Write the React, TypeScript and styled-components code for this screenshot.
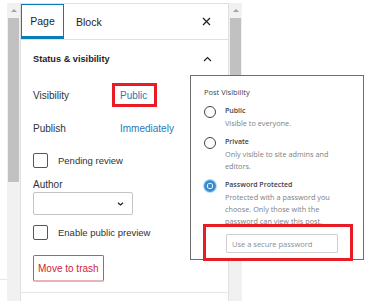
import styled, { createGlobalStyle } from "styled-components"

const Global = createGlobalStyle`
  body {
    margin: 0;
    background: #fff;
    font-family: "Liberation Sans", Arial, sans-serif;
    color: #2c3338;
  }
`

export default function App() {
  return (
    <Screen>
      <Global />
      <Gutter />
      <Scrollbar>
        <Arrow />
        <Thumb $h={164} />
      </Scrollbar>
      <Panel>
        <TabBar>
          <Tab $active>Page</Tab>
          <Tab>Block</Tab>
          <IconButton>
            <svg width="9" height="9" viewBox="0 0 9 9">
              <path d="M1 1L8 8M8 1L1 8" stroke="#1e1e1e" strokeWidth="1.2" />
            </svg>
          </IconButton>
        </TabBar>
        <SectionHeader>
          <SectionTitle>Status &amp; visibility</SectionTitle>
          <svg width="9" height="6" viewBox="0 0 9 6">
            <path d="M1 5L4.5 1.5L8 5" stroke="#1e1e1e" strokeWidth="1.1" fill="none" />
          </svg>
        </SectionHeader>
        <Row $h={30}>
          <Label>Visibility</Label>
          <Marked>Public</Marked>
        </Row>
        <Row $h={36}>
          <Label>Publish</Label>
          <Link>Immediately</Link>
        </Row>
        <CheckRow>
          <Box />
          <span>Pending review</span>
        </CheckRow>
        <FieldLabel>Author</FieldLabel>
        <Select>
          <svg width="7" height="4" viewBox="0 0 7 4">
            <path d="M1 0.8L3.5 3L6 0.8" stroke="#1e1e1e" strokeWidth="1.2" fill="none" />
          </svg>
        </Select>
        <CheckRow $top={3}>
          <Box />
          <span>Enable public preview</span>
        </CheckRow>
        <TrashButton>Move to trash</TrashButton>
        <Separator />
      </Panel>
      <Scrollbar>
        <Arrow />
        <Thumb $h={164} />
      </Scrollbar>

      <Popover>
        <PopTitle>Post Visibility</PopTitle>
        <Option>
          <Radio />
          <div>
            <OptLabel>Public</OptLabel>
            <OptDesc>Visible to everyone.</OptDesc>
          </div>
        </Option>
        <Option>
          <Radio />
          <div>
            <OptLabel>Private</OptLabel>
            <OptDesc>
              Only visible to site admins and
              <br />
              editors.
            </OptDesc>
          </div>
        </Option>
        <Option>
          <Radio $checked />
          <div>
            <OptLabel>Password Protected</OptLabel>
            <OptDesc>
              Protected with a password you
              <br />
              choose. Only those with the
              <br />
              password can view this post.
            </OptDesc>
          </div>
        </Option>
        <PasswordInput placeholder="Use a secure password" />
        <Annotation />
      </Popover>
    </Screen>
  )
}

const Screen = styled.div`
  position: relative;
  display: flex;
  align-items: flex-start;
  height: 301px;
  padding-top: 3px;
  box-sizing: border-box;
  overflow: hidden;
`

const Gutter = styled.div`
  width: 7px;
  height: 298px;
  flex-shrink: 0;
  background: linear-gradient(#fff 276px, #e6e6e6 276px, #e6e6e6 277px, #fff 277px);
`

const Scrollbar = styled.div`
  width: 13px;
  height: 298px;
  flex-shrink: 0;
  background: #f1f1f1;
  display: flex;
  flex-direction: column;
  align-items: center;
`

const Arrow = styled.div`
  height: 15px;
  width: 100%;
  display: flex;
  align-items: center;
  justify-content: center;
  &::before {
    content: "";
    border-left: 3px solid transparent;
    border-right: 3px solid transparent;
    border-bottom: 3px solid #a3a3a3;
  }
`

const Thumb = styled.div<{ $h: number }>`
  width: 11px;
  height: ${(p) => p.$h}px;
  background: #c1c1c1;
`

const Panel = styled.div`
  width: 207px;
  height: 298px;
  flex-shrink: 0;
  border: 1px solid #e0e0e0;
  border-bottom: none;
  display: flex;
  flex-direction: column;
  font-size: 10px;
`

const TabBar = styled.div`
  display: flex;
  align-items: stretch;
  height: 35px;
  border-bottom: 1px solid #e0e0e0;
`

const Tab = styled.div<{ $active?: boolean }>`
  display: flex;
  align-items: center;
  font-size: 10.5px;
  color: #1e1e1e;
  box-sizing: border-box;
  width: ${(p) => (p.$active ? "43px" : "auto")};
  justify-content: ${(p) => (p.$active ? "center" : "flex-start")};
  border: ${(p) => (p.$active ? "1.5px solid #0a7bb5" : "none")};
  border-bottom-width: ${(p) => (p.$active ? "3px" : "0")};
  padding-left: ${(p) => (p.$active ? "0" : "12px")};
  padding-right: ${(p) => (p.$active ? "0" : "10px")};
`

const IconButton = styled.div`
  margin-left: auto;
  width: 28px;
  margin-right: 8px;
  display: flex;
  align-items: center;
  justify-content: center;
`

const SectionHeader = styled.div`
  height: 38px;
  display: flex;
  align-items: center;
  justify-content: space-between;
  padding: 0 16px 2px 12px;
`

const SectionTitle = styled.div`
  font-weight: 700;
  font-size: 9.2px;
  color: #1e1e1e;
`

const Row = styled.div<{ $h: number }>`
  height: ${(p) => p.$h}px;
  display: grid;
  grid-template-columns: 87px 1fr;
  align-items: center;
  padding: 0 12px;
`

const Label = styled.span``

const Link = styled.span`
  color: #2a78b8;
`

const Marked = styled(Link)`
  position: relative;
  justify-self: start;
  &::after {
    content: "";
    position: absolute;
    left: -8px;
    right: -10px;
    top: -7px;
    bottom: -6px;
    border: 3px solid #e81c24;
  }
`

const CheckRow = styled.div<{ $top?: number }>`
  height: 28px;
  margin-top: ${(p) => p.$top ?? 0}px;
  display: flex;
  align-items: center;
  gap: 10px;
  padding: 0 12px;
  font-size: 9.5px;
`

const Box = styled.div`
  width: 13px;
  height: 13px;
  border: 1px solid #50575e;
  border-radius: 2px;
`

const FieldLabel = styled.div`
  margin-top: 4px;
  line-height: 14px;
  padding: 0 12px;
`

const Select = styled.div`
  margin: 0 12px;
  width: 100px;
  height: 23px;
  box-sizing: border-box;
  border: 1px solid #c3c4c7;
  border-radius: 2px;
  display: flex;
  align-items: center;
  justify-content: flex-end;
  padding-right: 8px;
`

const TrashButton = styled.div`
  margin: 9px 12px 0;
  align-self: flex-start;
  height: 27px;
  box-sizing: border-box;
  padding: 0 4px;
  display: flex;
  align-items: center;
  border: 1px solid #d94f55;
  border-bottom: 2px solid #eab3b6;
  border-radius: 2px;
  color: #cc1d3a;
`

const Separator = styled.div`
  margin-top: 10px;
  border-top: 1px solid #e6e6e6;
`

const Popover = styled.div`
  position: absolute;
  left: 190px;
  top: 75px;
  width: 174px;
  height: 185px;
  box-sizing: border-box;
  background: #fff;
  border: 1px solid #6e6e6e;
  padding: 10px 0 0 13px;
  font-family: "Open Sans", sans-serif;
`

const PopTitle = styled.div`
  font-size: 7.5px;
  color: #3c434a;
  line-height: 12px;
  margin-bottom: 7px;
`

const Option = styled.div`
  display: flex;
  gap: 9px;
  margin-bottom: 7px;
`

const Radio = styled.div<{ $checked?: boolean }>`
  width: 12px;
  height: 12px;
  box-sizing: border-box;
  border-radius: 50%;
  flex-shrink: 0;
  margin-top: 1px;
  border: ${(p) => (p.$checked ? "3px solid #3a8cd0" : "1.2px solid #3c434a")};
  background: ${(p) => (p.$checked ? "radial-gradient(circle, #3a8cd0 0 2px, #fff 2.5px)" : "#fff")};
  box-shadow: ${(p) => (p.$checked ? "0 0 0 1px #b9d8f0" : "none")};
`

const OptLabel = styled.div`
  font-size: 7px;
  font-weight: 600;
  color: #3c434a;
  line-height: 12px;
`

const OptDesc = styled.div`
  font-size: 7.3px;
  color: #7a7f85;
  line-height: 12px;
`

const PasswordInput = styled.input`
  display: block;
  margin: 1px 0 0 22px;
  width: 112px;
  height: 19px;
  box-sizing: border-box;
  border: 1px solid #d0d0d0;
  border-radius: 1px;
  font-family: "Open Sans", sans-serif;
  font-size: 7.5px;
  padding: 0 5px;
  &::placeholder {
    color: #8a8f94;
  }
`

const Annotation = styled.div`
  position: absolute;
  left: 12px;
  top: 148px;
  width: 150px;
  height: 37px;
  box-sizing: border-box;
  border: 3px solid #e81c24;
`
